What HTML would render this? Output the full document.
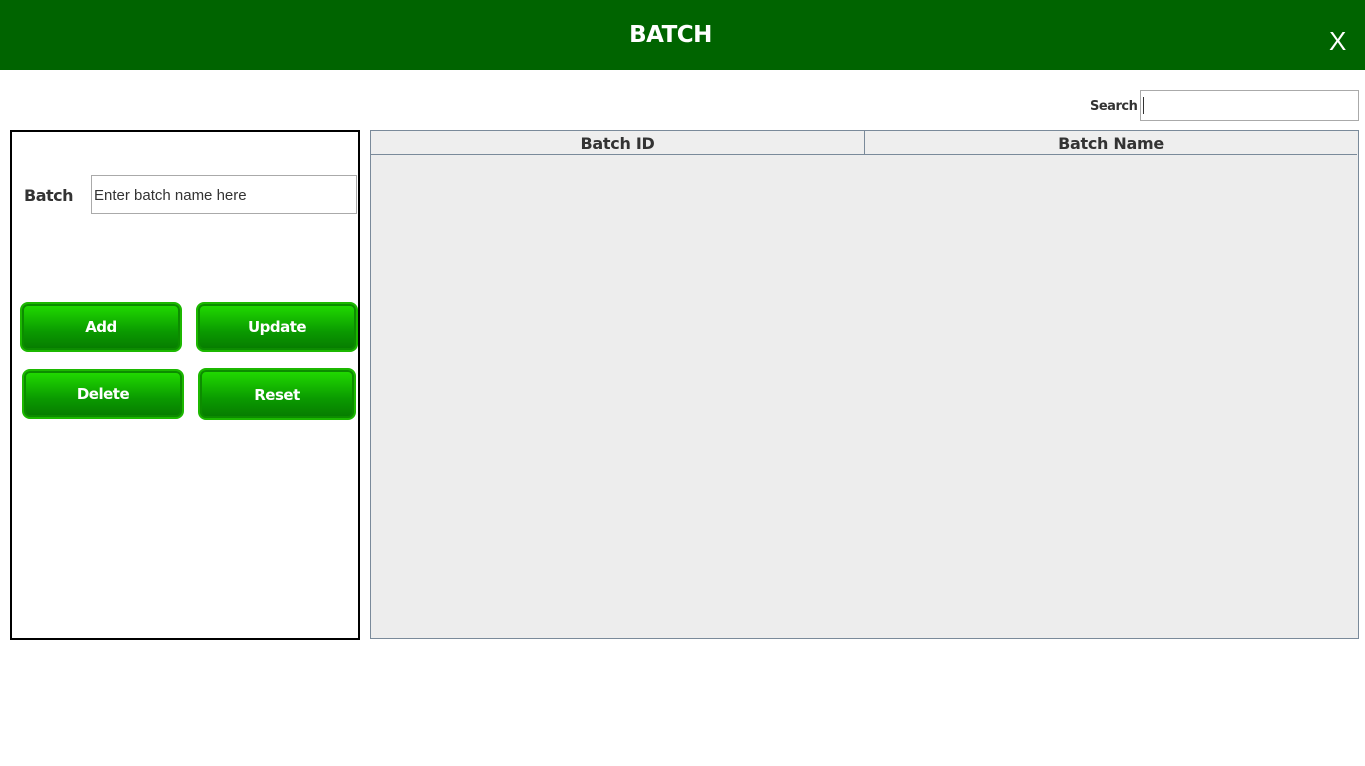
<!DOCTYPE html>
<html><head><style>
body{margin:0;width:1365px;height:766px;background:#fff;font-family:"DejaVu Sans","Liberation Sans",sans-serif;position:relative;overflow:hidden}
.hdr{position:absolute;left:0;top:0;width:1365px;height:70px;background:#006400}
.hdr .t{position:absolute;left:0;width:1341px;top:22px;text-align:center;color:#fff;font-weight:bold;font-size:23px;letter-spacing:-0.5px}
.hdr .x{position:absolute;left:1329px;top:26px;color:#fff;font-size:26px;font-family:"Liberation Sans",sans-serif}
.abs{position:absolute}
.btn{position:absolute;border-radius:8px;background:linear-gradient(#22dd00,#0a9a00 60%,#067a00);border:2px solid #1cb800;box-shadow:inset 0 0 0 2px #0c8c00;color:#fff;font-weight:bold;font-size:15px;text-align:center;box-sizing:border-box;letter-spacing:-0.5px}
</style></head><body>
<div class="hdr"><div class="t">BATCH</div><div class="x">X</div></div>
<div class="abs" style="left:1090px;top:99px;font-size:13px;font-weight:bold;color:#333;letter-spacing:-0.5px">Search</div>
<div class="abs" style="left:1140px;top:90px;width:217px;height:29px;border:1px solid #aaa"><div style="position:absolute;left:2px;top:6px;width:1px;height:17px;background:#333"></div></div>
<div class="abs" style="left:10px;top:130px;width:346px;height:506px;border:2px solid #000"></div>
<div class="abs" style="left:24px;top:186px;font-size:16px;font-weight:bold;color:#333;letter-spacing:-0.5px">Batch</div>
<div class="abs" style="left:91px;top:175px;width:262px;height:37px;border:1px solid #aaa;font-size:15px;color:#333;line-height:40px;padding-left:2px;font-family:'Liberation Sans',sans-serif">Enter batch name here</div>
<div class="btn" style="left:20px;top:302px;width:162px;height:50px;line-height:46px">Add</div>
<div class="btn" style="left:196px;top:302px;width:162px;height:50px;line-height:46px">Update</div>
<div class="btn" style="left:22px;top:369px;width:162px;height:50px;line-height:46px">Delete</div>
<div class="btn" style="left:198px;top:368px;width:158px;height:52px;line-height:50px">Reset</div>
<div class="abs" style="left:370px;top:130px;width:987px;height:507px;border:1px solid #7a8a9a;background:#ededed"></div>
<div class="abs" style="left:371px;top:131px;width:986px;height:23px;border-bottom:1px solid #7a8a9a;background:#eee"></div>
<div class="abs" style="left:864px;top:131px;width:1px;height:23px;background:#7a8a9a"></div>
<div class="abs" style="left:371px;top:134px;width:493px;text-align:center;font-size:16px;font-weight:bold;color:#333;letter-spacing:-0.3px">Batch ID</div>
<div class="abs" style="left:865px;top:134px;width:492px;text-align:center;font-size:16px;font-weight:bold;color:#333;letter-spacing:-0.3px">Batch Name</div>
</body></html>
